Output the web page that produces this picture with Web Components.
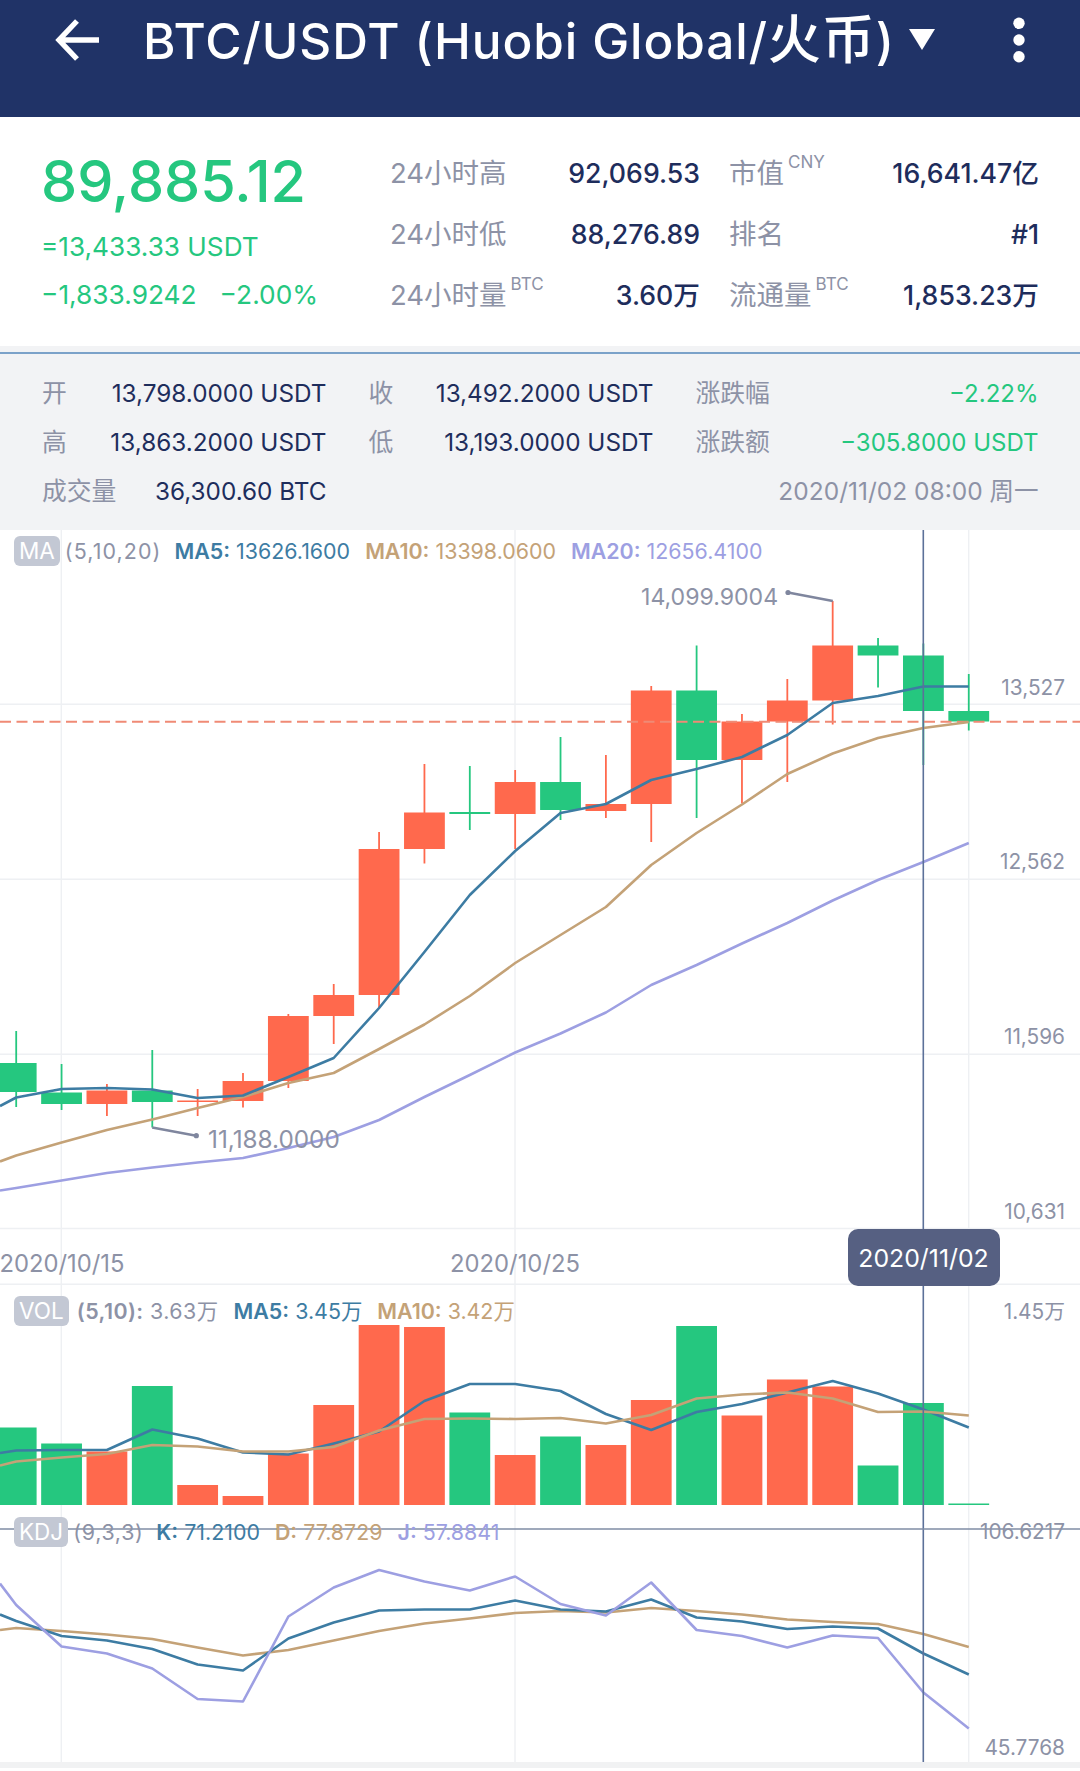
<!DOCTYPE html>
<html lang="zh">
<head>
<meta charset="utf-8">
<title>BTC/USDT</title>
<style>
  html, body { margin: 0; padding: 0; background: #fff; }
  body { width: 1080px; font-family: Inter, "Noto Sans CJK SC", sans-serif; }
</style>
</head>
<body>
<app-header>BTC/USDT (Huobi Global/<span style="font-size:53px">火币</span>)</app-header>

<ticker-summary>
  <span slot="price">89,885.12</span>
  <span slot="convert">=13,433.33 USDT</span>
  <span slot="change">−1,833.9242</span>
  <span slot="percent">−2.00%</span>
  <stat-cell label="24小时高">92,069.53</stat-cell>
  <stat-cell label="市值" unit="CNY">16,641.47亿</stat-cell>
  <stat-cell label="24小时低">88,276.89</stat-cell>
  <stat-cell label="排名">#1</stat-cell>
  <stat-cell label="24小时量" unit="BTC">3.60万</stat-cell>
  <stat-cell label="流通量" unit="BTC">1,853.23万</stat-cell>
</ticker-summary>

<ohlc-panel>
  <stat-cell label="开">13,798.0000 USDT</stat-cell>
  <stat-cell label="收">13,492.2000 USDT</stat-cell>
  <stat-cell label="涨跌幅" tone="up">−2.22%</stat-cell>
  <stat-cell label="高">13,863.2000 USDT</stat-cell>
  <stat-cell label="低">13,193.0000 USDT</stat-cell>
  <stat-cell label="涨跌额" tone="up">−305.8000 USDT</stat-cell>
  <stat-cell label="成交量">36,300.60 BTC</stat-cell>
  <stat-cell tone="muted" class="wide">2020/11/02 08:00 周一</stat-cell>
</ohlc-panel>

<kline-chart></kline-chart>

<script>
class AppHeader extends HTMLElement {
  constructor() {
    super();
    this.attachShadow({ mode: 'open' });
  }
  connectedCallback() {
    this.shadowRoot.innerHTML = `
      <style>
        :host { display: flex; align-items: flex-start; height: 117px; background: #203367; color: #fff; box-sizing: border-box; padding: 0 55px 0 54px; }
        .back { width: 48px; height: 46px; margin-top: 17px; flex: none; }
        .title { margin-left: 41px; width: 766px; flex: none; font: 500 49.5px/80px Inter, "Noto Sans CJK SC", sans-serif; letter-spacing: .9px; white-space: nowrap; }
        .caret { width: 26px; height: 21px; margin-top: 29px; flex: none; }
        .more { width: 12px; height: 46px; margin: 17px 0 0 auto; flex: none; }
      </style>
      <svg class="back" viewBox="0 0 48 46" fill="none" stroke="#fff" stroke-width="5.4">
        <path d="M45 23H6M23 4 5 23 23 42"/>
      </svg>
      <div class="title"><slot></slot></div>
      <svg class="caret" viewBox="0 0 26 21"><path d="M0 0h26L13 21z" fill="#fff"/></svg>
      <svg class="more" viewBox="0 0 12 46" fill="#fff"><circle cx="6" cy="6.3" r="5.7"/><circle cx="6" cy="23" r="5.7"/><circle cx="6" cy="39.7" r="5.7"/></svg>
    `;
  }
}

class StatCell extends HTMLElement {
  constructor() {
    super();
    this.attachShadow({ mode: 'open' });
  }
  connectedCallback() {
    const label = this.getAttribute('label');
    const unit = this.getAttribute('unit');
    const tone = this.getAttribute('tone') || '';
    this.shadowRoot.innerHTML = `
      <style>
        :host { display: flex; justify-content: space-between; align-items: center; white-space: nowrap; font: var(--cell-weight, 500) var(--cell-size, 24px)/1 Inter, "Noto Sans CJK SC", sans-serif; color: #1e2d5c; }
        .label { font-size: var(--label-size, 24.8px); font-weight: 400; color: #8d92a6; position: relative; }
        .unit { position: absolute; left: 100%; margin-left: 4px; top: -6px; font-size: 17px; }
        .value { margin-left: auto; }
        .value.up { color: #25c77f; font-size: 24px; }
        .value.muted { color: #8d92a6; }
      </style>
      ${label ? `<span class="label">${label}${unit ? `<span class="unit">${unit}</span>` : ''}</span>` : ''}
      <span class="value ${tone}"><slot></slot></span>
    `;
  }
}

class TickerSummary extends HTMLElement {
  constructor() {
    super();
    this.attachShadow({ mode: 'open' });
  }
  connectedCallback() {
    this.shadowRoot.innerHTML = `
      <style>
        :host { display: flex; height: 229px; box-sizing: border-box; padding: 0 41px 0 41px; background: #fff; font-family: Inter, "Noto Sans CJK SC", sans-serif; }
        .left { width: 349px; flex: none; color: #25c77f; padding-top: 34px; }
        .price { font: 500 57.5px/60px Inter, sans-serif; white-space: nowrap; }
        .convert { font-size: 26.2px; line-height: 34px; margin-top: 19px; white-space: nowrap; }
        .change { font-size: 26.3px; line-height: 34px; margin-top: 14px; display: flex; gap: 23px; white-space: nowrap; }
        .grid { display: grid; grid-template-columns: 310px 310px; column-gap: 29px; grid-auto-rows: 61px; padding-top: 26px; --cell-size: 26.7px; --label-size: 27.5px; }
      </style>
      <div class="left">
        <div class="price"><slot name="price"></slot></div>
        <div class="convert"><slot name="convert"></slot></div>
        <div class="change"><slot name="change"></slot><slot name="percent"></slot></div>
      </div>
      <div class="grid"><slot></slot></div>
    `;
  }
}

class OhlcPanel extends HTMLElement {
  constructor() {
    super();
    this.attachShadow({ mode: 'open' });
  }
  connectedCallback() {
    this.shadowRoot.innerHTML = `
      <style>
        :host { display: block; background: #f2f3f5; padding-top: 6px; }
        .line { height: 1.5px; background: #7ba2c9; }
        .grid { display: grid; grid-template-columns: 284.5px 285px 343px; column-gap: 42px; grid-auto-rows: 49px; padding: 15.5px 42px 14px; --cell-size: 24.3px; --cell-weight: 400; }
        ::slotted(.wide) { grid-column: 2 / 4; --cell-size: 24.5px; }
      </style>
      <div class="line"></div>
      <div class="grid"><slot></slot></div>
    `;
  }
}

class ChartLegend extends HTMLElement {
  constructor() {
    super();
    this.attachShadow({ mode: 'open' });
  }
  connectedCallback() {
    this.shadowRoot.innerHTML = `
      <style>
        :host { display: flex; align-items: center; gap: var(--badge-gap, 5px); padding-left: 14px; height: 30px; font: 400 21.4px/30px Inter, "Noto Sans CJK SC", sans-serif; color: #8d92a6; white-space: nowrap; }
        .badge { height: 30px; padding: 0 5px; border-radius: 6px; background: #c3c8d4; color: #fff; display: flex; align-items: center; font-size: 22.5px; }
        .items { display: flex; gap: 15px; }
      </style>
      <span class="badge">${this.getAttribute('badge')}</span>
      <div class="items"><slot></slot></div>
    `;
  }
}

class LegendItem extends HTMLElement {
  constructor() {
    super();
    this.attachShadow({ mode: 'open' });
  }
  connectedCallback() {
    const color = this.getAttribute('color');
    this.shadowRoot.innerHTML = `
      <style>
        :host { display: inline-block; color: ${color || 'inherit'}; }
        b { font-weight: 600; }
      </style>
      <b>${this.getAttribute('name') || ''}</b> <slot></slot>
    `;
  }
}

const RED = '#ff694d';
const GREEN = '#25c77f';
const BLUE = '#3d7ca3';
const TAN = '#c4a277';
const LAVENDER = '#9d9fe2';

const candleX = i => 16.2 + 45.36 * i;

// [direction, body top, body bottom, wick top, wick bottom]
const CANDLES = [
  ['g', 1063, 1092, 1031, 1107], ['g', 1092.5, 1104, 1064, 1110], ['r', 1090.5, 1104, 1084, 1116],
  ['g', 1090.5, 1102, 1050, 1127.5], ['r', 1100.5, 1102, 1089, 1116], ['r', 1081, 1101, 1073, 1107.5],
  ['r', 1016, 1081, 1014, 1088], ['r', 995, 1016, 984, 1044], ['r', 849, 995, 832, 1008],
  ['r', 812.5, 849, 764, 863.5], ['g', 812, 814, 766, 830], ['r', 782, 814, 770, 849],
  ['g', 782, 810, 737, 820], ['r', 804, 811, 755, 818], ['r', 690.5, 804, 686, 842],
  ['g', 690.5, 760, 645.5, 818], ['r', 721.5, 760, 714, 803.5], ['r', 700.5, 721.5, 679, 782],
  ['r', 645.5, 700.5, 601, 724.5], ['g', 645.5, 655.5, 638, 687.5], ['g', 655.5, 711, 643.5, 765],
  ['g', 711, 721.5, 674, 730.5]
];

const MA5 = [1106, 1097.5, 1089, 1088, 1089.5, 1098, 1095.5, 1077, 1058, 1008, 952, 895, 851, 813, 804, 780, 769, 757, 735, 703, 696, 686.5, 686.5];
const MA10 = [1161.5, 1155.5, 1142.5, 1130, 1119.5, 1108, 1097, 1083, 1073, 1049, 1024.5, 996, 963, 935, 907, 865, 833, 804.5, 774, 753.5, 738, 728, 722];
const MA20 = [1190.5, 1188, 1180.5, 1173, 1167.5, 1162.5, 1158, 1148, 1137, 1120, 1097, 1075, 1052.5, 1033.5, 1012.5, 985, 965, 943.5, 923, 900.5, 880, 862, 843];

const VOL_TOP = [1427.5, 1443.5, 1451.5, 1386, 1485, 1496, 1453.5, 1405, 1325, 1327, 1412.5, 1455, 1436.5, 1445, 1400, 1326, 1415.5, 1379.5, 1386.5, 1465.5, 1403, 1503.5];
const VOL_MA5 = [1453, 1450.5, 1450, 1450, 1429.5, 1438.5, 1452.5, 1454.5, 1443.5, 1431.5, 1401, 1384, 1384, 1391, 1414, 1430, 1412, 1404, 1392.5, 1381, 1393.5, 1409.5, 1427.5];
const VOL_MA10 = [1465.5, 1461.5, 1457.5, 1454, 1445, 1446.5, 1451.5, 1451.5, 1447, 1430.5, 1419, 1418.5, 1419, 1418, 1423.5, 1415, 1398.5, 1394.5, 1392.5, 1398.5, 1412, 1411.5, 1415.5];

const KDJ_J = [1583.5, 1605, 1646.5, 1653.5, 1668.5, 1699, 1701.5, 1616.5, 1587.5, 1570, 1581.5, 1590.5, 1576.5, 1604, 1615.5, 1582.5, 1630, 1636, 1647.5, 1635.5, 1638, 1692.5, 1728.5];
const KDJ_K = [1614.5, 1621, 1636, 1640.5, 1649, 1664.5, 1670.5, 1638.5, 1622.5, 1610.5, 1609.5, 1609.5, 1600.5, 1609.5, 1611.5, 1599.5, 1617.5, 1621.5, 1629, 1626.5, 1628.5, 1653.5, 1674.5];
const KDJ_D = [1630, 1628, 1631, 1634.5, 1639, 1647.5, 1655.5, 1650, 1640.5, 1631, 1623.5, 1618.5, 1613, 1611, 1612.5, 1608, 1611, 1614.5, 1619.5, 1622, 1624, 1634, 1647];

const line = (ys, color) => {
  const pts = ys.map((y, n) => `${n === 0 ? 0 : candleX(n - 1).toFixed(1)},${y}`).join(' ');
  return `<polyline points="${pts}" fill="none" stroke="${color}" stroke-width="2.6" stroke-linejoin="round"/>`;
};

class KlineChart extends HTMLElement {
  constructor() {
    super();
    this.attachShadow({ mode: 'open' });
  }

  getCandles() {
    return CANDLES.map((c, i) => {
      const x = candleX(i);
      const color = c[0] === 'g' ? GREEN : RED;
      return `<path d="M${x} ${c[3]}V${c[4]}" stroke="${color}" stroke-width="1.8"/>
        <rect x="${x - 20.4}" y="${c[1]}" width="40.8" height="${c[2] - c[1]}" fill="${color}"/>`;
    }).join('');
  }

  getBars() {
    return VOL_TOP.map((y, i) => {
      const color = CANDLES[i][0] === 'g' ? GREEN : RED;
      return `<rect x="${candleX(i) - 20.4}" y="${y}" width="40.8" height="${1505 - y}" fill="${color}"/>`;
    }).join('');
  }

  getGrid() {
    const h = [704.3, 879.3, 1054.3, 1228.5, 1284.3].map(y => `<path d="M0 ${y}H1080"/>`).join('');
    const v = [61.3, 515, 968.7].map(x => `<path d="M${x} 530V1762"/>`).join('');
    return `<g stroke="#eef0f3" stroke-width="1.4">${h}${v}</g>`;
  }

  render() {
    this.shadowRoot.innerHTML = `
      <style>
        :host { display: block; position: relative; height: 1241px; background: #fff; overflow: hidden; font-family: Inter, "Noto Sans CJK SC", sans-serif; }
        svg { position: absolute; left: 0; top: -.4px; }
        .pane { position: relative; box-sizing: border-box; }
        .main { height: 755px; padding-top: 6px; }
        .vol { height: 231px; padding-top: 11px; --badge-gap: 8px; }
        .kdj { height: 246px; padding-top: 1px; }
        .foot { height: 6px; background: #f1f2f3; position: relative; }
        .mark { position: absolute; font-size: 23.1px; line-height: 30px; color: #8d92a6; white-space: nowrap; transform: translateY(-50%); }
        .axis { right: 15px; font-size: 20.8px; }
        .date { font-size: 23.8px; transform: translate(-50%, -50%); }
        .tip { position: absolute; left: 847.5px; top: 699px; width: 152px; height: 57px; border-radius: 10px; background: #566082; color: #fff; font-size: 24.8px; display: flex; align-items: center; justify-content: center; }
      </style>
      <svg width="1080" height="1232" viewBox="0 530 1080 1232">
        ${this.getGrid()}
        ${this.getCandles()}
        ${this.getBars()}
        <path d="M0 721.8H1080" stroke="#f08a75" stroke-width="2" stroke-dasharray="11 5.5"/>
        ${line(MA20, LAVENDER)}${line(MA10, TAN)}${line(MA5, BLUE)}
        ${line(VOL_MA5, BLUE)}${line(VOL_MA10, TAN)}
        ${line(KDJ_D, TAN)}${line(KDJ_K, BLUE)}${line(KDJ_J, LAVENDER)}
        <path d="M832.8 601 788 592.5M152.2 1127.5 196.3 1135.7" stroke="#7f869e" stroke-width="2.4" fill="none"/>
        <circle cx="788" cy="592.5" r="2.6" fill="#7f869e"/><circle cx="196.3" cy="1135.7" r="2.6" fill="#7f869e"/>
        <path d="M923.3 530V1762" stroke="#5c7199" stroke-width="1.6"/>
        <path d="M0 1529H1080" stroke="#7f8ca4" stroke-width="1.6"/>
      </svg>
      <section class="pane main">
        <chart-legend badge="MA">
          <legend-item style="letter-spacing:1.1px;margin-right:-2px">(5,10,20)</legend-item>
          <legend-item color="${BLUE}" name="MA5:">13626.1600</legend-item>
          <legend-item color="${TAN}" name="MA10:">13398.0600</legend-item>
          <legend-item color="${LAVENDER}" name="MA20:">12656.4100</legend-item>
        </chart-legend>
      </section>
      <section class="pane vol">
        <chart-legend badge="VOL">
          <legend-item name="(5,10):" style="letter-spacing:.45px">3.63万</legend-item>
          <legend-item color="${BLUE}" name="MA5:">3.45万</legend-item>
          <legend-item color="${TAN}" name="MA10:">3.42万</legend-item>
        </chart-legend>
      </section>
      <section class="pane kdj">
        <chart-legend badge="KDJ">
          <legend-item style="letter-spacing:.7px;margin-right:-2.3px">(9,3,3)</legend-item>
          <legend-item color="${BLUE}" name="K:">71.2100</legend-item>
          <legend-item color="${TAN}" name="D:">77.8729</legend-item>
          <legend-item color="${LAVENDER}" name="J:">57.8841</legend-item>
        </chart-legend>
      </section>
      <div class="foot"></div>
      <span class="mark" style="left:641px;top:67px">14,099.9004</span>
      <span class="mark" style="left:208px;top:609px;font-size:24.3px">11,188.0000</span>
      <span class="mark axis" style="top:158px">13,527</span>
      <span class="mark axis" style="top:332px">12,562</span>
      <span class="mark axis" style="top:507px">11,596</span>
      <span class="mark axis" style="top:682px">10,631</span>
      <span class="mark date" style="left:62px;top:734px">2020/10/15</span>
      <span class="mark date" style="left:515px;top:734px">2020/10/25</span>
      <span class="tip">2020/11/02</span>
      <span class="mark axis" style="top:782px">1.45万</span>
      <span class="mark axis" style="top:1002px">106.6217</span>
      <span class="mark axis" style="top:1218px">45.7768</span>
    `;
  }

  connectedCallback() {
    this.render();
  }
}

customElements.define('app-header', AppHeader);
customElements.define('stat-cell', StatCell);
customElements.define('ticker-summary', TickerSummary);
customElements.define('ohlc-panel', OhlcPanel);
customElements.define('chart-legend', ChartLegend);
customElements.define('legend-item', LegendItem);
customElements.define('kline-chart', KlineChart);
</script>
</body>
</html>
